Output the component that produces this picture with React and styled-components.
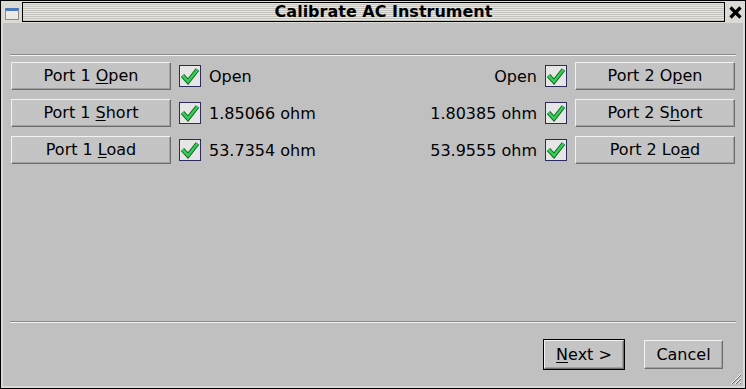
import React from "react";
import styled, { createGlobalStyle } from "styled-components";

const Global = createGlobalStyle`
  html, body {
    margin: 0;
    padding: 0;
    background: #c0c0c0;
  }
  * {
    box-sizing: border-box;
  }
`;

const Window = styled.div`
  width: 746px;
  height: 389px;
  border: 1px solid #000;
  background: #dcdad5;
  display: flex;
  flex-direction: column;
  font-family: "DejaVu Sans", Verdana, sans-serif;
  font-size: 16px;
  color: #000;
`;

const TitleBar = styled.div`
  height: 22px;
  display: flex;
  align-items: center;
  padding: 1px 0 1px 3px;
`;

const WinIcon = styled.div`
  width: 14px;
  height: 12px;
  margin: 3px 3px 0 1px;
  border: 1px solid #8a8a8a;
  border-top: 3px solid #4a78c0;
  background: #eceae6;
`;

const TitleStripes = styled.div`
  flex: 1;
  height: 20px;
  border: 1px solid #000;
  background: repeating-linear-gradient(
    to bottom,
    #e8e6e1 0px,
    #e8e6e1 1px,
    #c4c2bd 1px,
    #c4c2bd 2px
  );
  display: flex;
  align-items: center;
  justify-content: center;
  padding-left: 20px;
  font-weight: bold;
  font-size: 16px;
  line-height: 18px;
`;

const CloseBox = styled.div`
  width: 20px;
  display: flex;
  justify-content: center;
  align-items: center;
`;

const Body = styled.div`
  flex: 1;
  margin: 0 2px 2px 2px;
  background: #c0c0c0;
  padding: 31px 7px 0 7px;
  display: flex;
  flex-direction: column;
  position: relative;
`;

const Separator = styled.div`
  height: 2px;
  border-top: 1px solid #8a8a8a;
  border-bottom: 1px solid #f4f4f4;
`;

const Rows = styled.div`
  margin-top: 6px;
  display: flex;
  flex-direction: column;
  gap: 9px;
  padding: 0 1px;
`;

const Row = styled.div`
  display: flex;
  align-items: center;
  justify-content: space-between;
  height: 28px;
`;

const Side = styled.div`
  display: flex;
  align-items: center;
  gap: 8px;
`;

const Button = styled.button`
  font-family: inherit;
  font-size: 16px;
  color: #000;
  width: ${(p) => p.w || 160}px;
  height: ${(p) => p.h || 28}px;
  background: #c4c4c4;
  border: 1px solid;
  border-color: #f2f2f2 #6e6e6e #6e6e6e #f2f2f2;
  box-shadow: inset -1px -1px 0 #a0a0a0;
  padding: 0;
  line-height: 1;
  outline: ${(p) => (p.$default ? "1px solid #000" : "none")};
  outline-offset: 0;
`;

const Mn = styled.span`
  text-decoration: underline;
  text-underline-offset: 2px;
`;

const Label = styled.span`
  white-space: nowrap;
`;

const Spacer = styled.div`
  flex: 1;
`;

const Footer = styled.div`
  display: flex;
  justify-content: flex-end;
  align-items: center;
  gap: 20px;
  padding: 17px 13px 17px 0;
`;

const Grip = styled.svg`
  position: absolute;
  right: 1px;
  bottom: 1px;
`;

function Check() {
  return (
    <svg width="22" height="22" viewBox="0 0 22 22">
      <rect x="0.5" y="0.5" width="21" height="21" fill="#e6e6e6" stroke="#2c2c5c" />
      <path d="M3.5 10.5 L9 16.5 L18.5 4.5" fill="none" stroke="#1a5a1a" strokeWidth="4.4" />
      <path d="M3.5 10.5 L9 16.5 L18.5 4.5" fill="none" stroke="#2fd05a" strokeWidth="2.6" />
    </svg>
  );
}

const left = [
  { pre: "Port 1 ", mn: "O", post: "pen", value: "Open" },
  { pre: "Port 1 ", mn: "S", post: "hort", value: "1.85066 ohm" },
  { pre: "Port 1 ", mn: "L", post: "oad", value: "53.7354 ohm" },
];
const right = [
  { pre: "Port 2 O", mn: "p", post: "en", value: "Open" },
  { pre: "Port 2 S", mn: "h", post: "ort", value: "1.80385 ohm" },
  { pre: "Port 2 Lo", mn: "a", post: "d", value: "53.9555 ohm" },
];

export default function App() {
  return (
    <>
      <Global />
      <Window>
        <TitleBar>
          <WinIcon />
          <TitleStripes>Calibrate AC Instrument</TitleStripes>
          <CloseBox>
            <svg width="13" height="13" viewBox="0 0 13 13">
              <path d="M1.5 1.5 L11.5 11.5 M11.5 1.5 L1.5 11.5" stroke="#000" strokeWidth="3.2" />
            </svg>
          </CloseBox>
        </TitleBar>
        <Body>
          <Separator />
          <Rows>
            {left.map((l, i) => {
              const r = right[i];
              return (
                <Row key={i}>
                  <Side>
                    <Button>
                      {l.pre}
                      <Mn>{l.mn}</Mn>
                      {l.post}
                    </Button>
                    <Check />
                    <Label>{l.value}</Label>
                  </Side>
                  <Side>
                    <Label>{r.value}</Label>
                    <Check />
                    <Button>
                      {r.pre}
                      <Mn>{r.mn}</Mn>
                      {r.post}
                    </Button>
                  </Side>
                </Row>
              );
            })}
          </Rows>
          <Spacer />
          <Separator />
          <Footer>
            <Button w={80} h={29} $default>
              <Mn>N</Mn>ext &gt;
            </Button>
            <Button w={79} h={29}>
              Cancel
            </Button>
          </Footer>
          <Grip width="14" height="14" viewBox="0 0 14 14">
            <path d="M13 3 L3 13 M13 7 L7 13 M13 11 L11 13" stroke="#f4f4f4" strokeWidth="1" />
            <path d="M13 4 L4 13 M13 8 L8 13 M13 12 L12 13" stroke="#6e6e6e" strokeWidth="1" />
          </Grip>
        </Body>
      </Window>
    </>
  );
}
